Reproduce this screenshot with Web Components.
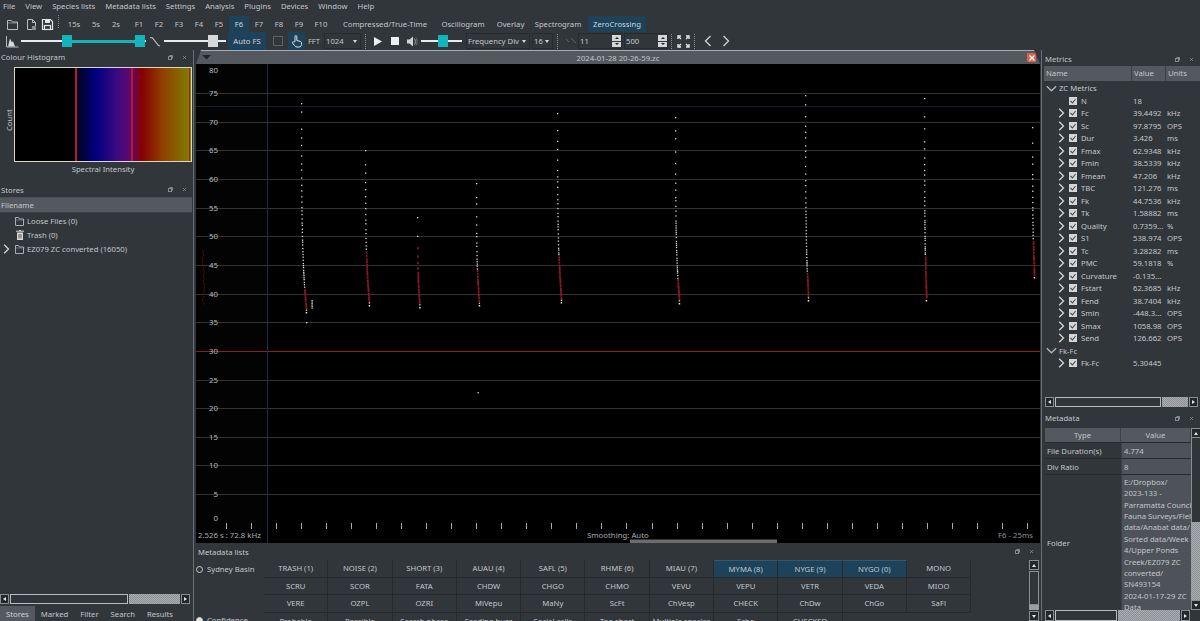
<!DOCTYPE html>
<html><head><meta charset="utf-8">
<style>
html,body{margin:0;padding:0;background:#31363b;overflow:hidden}
body{width:1200px;height:621px;font:7.7px "Noto Sans","Open Sans",sans-serif;color:#c2c6ca}
</style></head><body>
<app-window></app-window>
<script>
function def(name,css,html){
  const C=class extends HTMLElement{
    constructor(){super();const r=this.attachShadow({mode:'open'});r.innerHTML='<style>'+css+'</style>'+(typeof html==='function'?html(this):html);}
  };
  customElements.define(name,C);
}
const ic={
 open:'<svg width="13" height="13" viewBox="0 0 13 13" fill="none" stroke="#b8bcc0"><path d="M1.5 11.5v-9h4l1 1.5h5v7.5z"/><path d="M1.5 5h10" stroke-opacity=".6"/></svg>',
 file:'<svg width="13" height="13" viewBox="0 0 13 13" fill="none" stroke="#b8bcc0"><path d="M2.5 11.5v-10h5l3 3v7z"/><path d="M7.5 1.5v3h3"/><rect x="7" y="8" width="4" height="4" fill="#8a8e92" stroke="none"/></svg>',
 save:'<svg width="13" height="13" viewBox="0 0 13 13" fill="none" stroke="#e4e6e8" stroke-width="1.2"><path d="M1.5 1.5h8l2 2v8h-10z"/><rect x="4" y="1.5" width="5" height="3.5" fill="#e4e6e8" stroke="none"/><rect x="3.5" y="7.5" width="6" height="4"/></svg>',
 hist:'<svg width="14" height="13" viewBox="0 0 14 13" fill="none"><path d="M1.5 1v11h12" stroke="#b8bcc0"/><path d="M3 11.5l2-8 2 4 1-1.5 2 5.5z" fill="#d8dadc"/></svg>',
 diag:'<svg width="12" height="12" viewBox="0 0 12 12" fill="none" stroke="#c4c8cc" stroke-width="1.1"><path d="M1 2.5l2.5 .5 6 7.5 1.5 .5"/></svg>',
 hand:'<svg width="12" height="13" viewBox="0 0 12 13" fill="none" stroke="#e2e4e6"><path d="M4 6.5v-5a.9.9 0 011.8 0v4l3.2.8c1 .3 1.5.8 1.5 1.7v1.5c0 1.5-1 2.5-2.5 2.5h-2c-1 0-1.7-.5-2.3-1.3L1.5 8c-.5-1 .7-1.7 1.4-.9z"/></svg>',
 play:'<svg width="9" height="9" viewBox="0 0 9 9"><path d="M1 0l8 4.5-8 4.5z" fill="#eceeef"/></svg>',
 stop:'<svg width="8" height="8" viewBox="0 0 8 8"><rect width="8" height="8" fill="#eceeef"/></svg>',
 spk:'<svg width="11" height="11" viewBox="0 0 11 11"><path d="M0 3.5h2.5L6 .5v10L2.5 7.5H0z" fill="#d0d2d4"/><path d="M7.5 2.5c1.2 1.8 1.2 4.2 0 6" stroke="#a0a4a8" fill="none"/><path d="M9 1.5c1.6 2.5 1.6 5.5 0 8" stroke="#70747a" fill="none"/></svg>',
 dim:'<svg width="12" height="8" viewBox="0 0 12 8" fill="none" stroke="#5d6267"><path d="M1 2l3 3M6 1l5 5"/></svg>',
 full:'<svg width="13" height="13" viewBox="0 0 13 13" fill="none" stroke="#e6e8ea" stroke-width="1.4"><path d="M1 4V1h3M9 1h3v3M12 9v3H9M4 12H1V9"/><path d="M1.5 1.5l2.5 2.5M11.5 1.5L9 4M11.5 11.5L9 9M1.5 11.5L4 9"/></svg>',
 lt:'<svg width="8" height="12" viewBox="0 0 8 12" fill="none" stroke="#d0d2d4" stroke-width="1.3"><path d="M6.5 1L1.5 6l5 5"/></svg>',
 gt:'<svg width="8" height="12" viewBox="0 0 8 12" fill="none" stroke="#d0d2d4" stroke-width="1.3"><path d="M1.5 1l5 5-5 5"/></svg>',
 r:'<svg width="7" height="10" viewBox="0 0 7 10" fill="none" stroke="#d4d6d8" stroke-width="1.3"><path d="M1.2 .8L5.5 5 1.2 9.2"/></svg>',
 d:'<svg width="11" height="7" viewBox="0 0 11 7" fill="none" stroke="#b0b4b8" stroke-width="1.4"><path d="M.8 1.2L5.5 5.8 10.2 1.2"/></svg>',
 folder:'<svg width="10" height="9" viewBox="0 0 10 9" fill="none" stroke="#a8acb0"><path d="M.5 8.5v-8h3l1 1.5h4v6.5z"/><path d="M.5 3h9" stroke-opacity=".5"/></svg>',
 trash:'<svg width="8" height="10" viewBox="0 0 8 10"><path d="M1 2.5h6V10H1z" fill="#d8dadc"/><path d="M0 1.2h8M3 .4h2" stroke="#d8dadc"/><path d="M3 4v4.5M5 4v4.5" stroke="#555"/></svg>',
 chk:'<svg width="8" height="8" viewBox="0 0 8 8"><rect width="8" height="8" fill="#d4d6d8"/><path d="M1.5 4l2 2 3-4" stroke="#4a4f54" stroke-width="1.1" fill="none"/></svg>'
};

def('menu-bar',':host{display:flex;height:12px;align-items:center;padding-left:3px;gap:10px;line-height:12px;white-space:nowrap}',
 ['File','View','Species lists','Metadata lists','Settings','Analysis','Plugins','Devices','Window','Help'].map(t=>'<span>'+t+'</span>').join(''));

def('tool-btn',':host{display:flex;flex:none;height:100%;align-items:center;justify-content:center;white-space:nowrap;box-sizing:border-box}:host([on]){background:#1d4259;color:#cfd6dc}','<slot></slot>');
def('tool-sep',':host{display:block;flex:none;width:1px;height:15px;margin:0 4px;background-image:repeating-linear-gradient(#8a8e92 0 1px,transparent 1px 2px)}','');
def('combo-box',':host{display:flex;flex:none;height:16px;box-sizing:border-box;border:1px solid #272a2e;align-items:center;padding-left:1px;white-space:nowrap;justify-content:space-between;padding-right:3px}i{width:0;height:0;border:2.5px solid transparent;border-top:3px solid #d8dadc;border-bottom:0}','<span><slot></slot></span><i></i>');
def('spin-box',':host{display:flex;flex:none;height:16px;box-sizing:border-box;border:1px solid #272a2e;align-items:center;padding-left:1px;white-space:nowrap;justify-content:space-between;color:#c4c8cc}b{display:flex;flex-direction:column;width:9px;height:12px;gap:1px}b u{flex:1;background:#d4d6d8;display:flex;align-items:center;justify-content:center}b u::after{content:"";border:2px solid transparent}b u:first-child::after{border-bottom:2.5px solid #222;border-top:0}b u:last-child::after{border-top:2.5px solid #222;border-bottom:0}','<span><slot></slot></span><b><u></u><u></u></b>');
def('range-slider',':host{display:block;flex:none;position:relative;height:100%}.t{position:absolute;left:0;right:0;top:50%;height:2px;margin-top:-1px;background:#e8eaeb}.a{position:absolute;top:50%;height:3px;margin-top:-1.5px;background:#14b4bd}.h{position:absolute;top:50%;width:10px;height:12px;margin:-6px 0 0 -5px;background:var(--hc,#14b4bd)}',
 h=>{const hs=(h.getAttribute('handles')||'').split(',').map(Number);let s='<div class="t"></div>';if(hs.length>1)s+='<div class="a" style="left:'+hs[0]+'px;width:'+(hs[1]-hs[0])+'px"></div>';hs.forEach(x=>s+='<div class="h" style="left:'+x+'px"></div>');return s;});

const bb=(t,w,on)=>'<tool-btn style="width:'+w+'px" '+(on?'on':'')+'>'+t+'</tool-btn>';
const sp=w=>'<span style="flex:none;width:'+w+'px"></span>';
def('tool-bar-one',':host{display:flex;height:20px;align-items:flex-end;padding-left:5px}tool-btn{height:16px}',
 ()=>bb(ic.open,14)+sp(5)+bb(ic.file,14)+sp(2)+bb(ic.save,14)+'<tool-sep style="margin:0 5px 0 4px;height:14px;align-self:center"></tool-sep>'
 +bb('15s',20)+sp(2)+bb('5s',20)+bb('2s',20)+sp(3)
 +bb('F1',20)+bb('F2',20)+bb('F3',20)+bb('F4',20)+bb('F5',20)+bb('F6',20,1)+bb('F7',20)+bb('F8',20)+bb('F9',20)+bb('F10',24)+sp(10)
 +bb('Compressed/True-Time',84)+sp(15)+bb('Oscillogram',42)+sp(13)+bb('Overlay',27)+sp(11)+bb('Spectrogram',46)+sp(7)+bb('ZeroCrossing',58,1));

def('tool-bar-two',':host{display:flex;height:18px;align-items:center;padding-left:5px}tool-btn{height:18px}',
 ()=>bb(ic.hist,14)+sp(2)+'<range-slider handles="46,119" style="width:125px"></range-slider>'+sp(3)+bb(ic.diag,12)+sp(3)
 +'<range-slider handles="49" style="width:62px;--hc:#d6d8da"></range-slider>'+sp(2)
 +bb('Auto FS',38,1)+sp(7)+bb('<span style="display:block;width:10px;height:10px;border:1px solid #5d6267;box-sizing:border-box"></span>',10)+sp(5)+bb(ic.hand,17,1)+sp(3)+bb('FFT',12)+sp(4)
 +'<combo-box style="width:37px">1024</combo-box><tool-sep></tool-sep>'+sp(3)+bb(ic.play,9)+sp(9)+bb(ic.stop,8)+sp(8)+bb(ic.spk,11)+sp(3)
 +'<range-slider handles="22" style="width:41px"></range-slider>'+sp(4)
 +'<combo-box style="width:64px">Frequency Div</combo-box>'+sp(2)+'<combo-box style="width:21px">16</combo-box><tool-sep></tool-sep>'+sp(3)+bb(ic.dim,12)+sp(1)
 +'<spin-box style="width:44px">11</spin-box>'+sp(2)+'<spin-box style="width:44px">500</spin-box><tool-sep style="margin:0 5px 0 3px"></tool-sep>'+bb(ic.full,13)+'<tool-sep></tool-sep>'+sp(5)+bb(ic.lt,8)+sp(10)+bb(ic.gt,8));

def('dock-title',':host{display:flex;flex:none;height:14px;align-items:center;justify-content:space-between;padding:0 4px 0 var(--pl,1px);white-space:nowrap}span{display:flex;gap:9px;font-size:7px;padding-right:2px}svg{display:block}',
 '<slot></slot><span><svg width="5" height="5" viewBox="0 0 5 5" fill="none" stroke="#868a8e"><rect x=".5" y="1.5" width="3" height="3"/><path d="M1.5 .5h3v3"/></svg><svg width="5" height="5" viewBox="0 0 5 5" stroke="#868a8e" stroke-width=".8"><path d="M1 1l3 3M4 1L1 4"/></svg></span>');

def('scroll-bar',':host{display:flex;height:var(--h,11px);gap:1px;box-sizing:border-box;align-items:stretch;flex:none}.a{width:9px;flex:none;background:#24272a;border:1px solid #8a8e92;box-sizing:border-box;display:flex;align-items:center;justify-content:center}.a::after{content:"";border:2.5px solid transparent}.l::after{border-right:3px solid #e2e4e6;border-left:0}.r::after{border-left:3px solid #e2e4e6;border-right:0}.t{flex:var(--t,3);border:1px solid #b8bcc0;background:#30353a;box-sizing:border-box}.g{flex:var(--g,1);background:repeating-conic-gradient(#8e9296 0 25%,#a8acb0 0 50%) 0 0/2px 2px}',
 '<div class="a l"></div><div class="t"></div><div class="g"></div><div class="a r"></div>');

def('histogram-plot',':host{display:block;height:118px;position:relative;flex:none}.box{position:absolute;left:14px;top:3px;width:178px;height:95px;box-sizing:border-box;border:1px solid #d8d8c8;background:linear-gradient(90deg,#000 0 33%,#020224 36%,#000080 46%,#3c0a80 58%,#60086e 66%,#860000 72%,#904000 84%,#808000 100%)}.m{position:absolute;top:0;bottom:0;width:2px;background:#b01c30}.c{position:absolute;left:2px;top:46px;writing-mode:vertical-rl;transform:rotate(180deg);line-height:14px;height:21px}.s{position:absolute;left:14px;width:178px;text-align:center;top:98px;line-height:14px}',
 '<div class="box"><i class="m" style="left:60px"></i><i class="m" style="left:116px"></i><i class="m" style="left:174px;width:1px"></i></div><span class="c">Count</span><span class="s">Spectral Intensity</span>');

def('file-row',':host{display:flex;height:14px;align-items:center;white-space:nowrap}.a{width:13px;flex:none;padding-left:3px;box-sizing:border-box;display:flex}.i{width:14px;flex:none;display:flex;justify-content:center}',
 h=>'<span class="a">'+(h.hasAttribute('open')?ic.r:'')+'</span><span class="i">'+ic[h.getAttribute('icon')]+'</span><slot></slot>');

def('left-panel',':host{display:flex;flex-direction:column;flex:none;height:100%;border-right:1px solid #6a6f74;box-sizing:border-box;width:194px}.hd{height:16px;background:#54595f;display:flex;align-items:center;padding-left:1px;flex:none;border-top:1px solid #4a4f54;border-bottom:1px solid #3c4146;box-sizing:border-box;margin-right:1px}.tree{flex:1;padding-top:1px;min-height:0}.tabs{display:flex;height:15px;flex:none;align-items:center}.tabs span{padding:0 6px;height:100%;display:flex;align-items:center}.tabs .on{background:#54595f;color:#d0d2d4}',
 `<dock-title>Colour Histogram</dock-title><histogram-plot></histogram-plot>
 <dock-title style="height:15px">Stores</dock-title>
 <div class="hd">Filename</div>
 <div class="tree"><file-row icon="folder">Loose Files (0)</file-row><file-row icon="trash">Trash (0)</file-row><file-row icon="folder" open>EZ079 ZC converted (16050)</file-row></div>
 <scroll-bar style="--h:10px;--t:119;--g:52;margin:0 3px 2px 0"></scroll-bar>
 <div class="tabs"><span class="on">Stores</span><span>Marked</span><span>Filter</span><span>Search</span><span>Results</span></div>`);

def('doc-tab',':host{display:flex;height:14px;flex:none;background:#54595f;border-top:1px solid #a8acb2;box-sizing:border-box;align-items:center;justify-content:center;position:relative;color:#c0c4c8;clip-path:polygon(5px 0,calc(100% - 6px) 0,100% 100%,0 100%)}svg{position:absolute;left:6px;top:4px}.x{position:absolute;right:4px;top:2px;width:9px;height:9px;background:#e0604f;border-radius:1px;display:flex;align-items:center;justify-content:center}',
 '<svg width="9" height="5" viewBox="0 0 9 5"><path d="M0 0h9L4.5 4.5z" fill="#24272a"/></svg><slot></slot><span class="x"><svg style="position:static;display:block" width="6" height="6" viewBox="0 0 6 6" stroke="#fff" stroke-width="1.3"><path d="M.5 .5l5 5M5.5 .5l-5 5"/></svg></span>');

def('zc-chart',':host{display:block;height:479px;flex:none;background:#000;position:relative;overflow:hidden}svg{display:block;font:7.8px "Noto Sans","Open Sans",sans-serif}',
 ()=>{
  let seed=7;const rnd=()=>(seed=(seed*16807)%2147483647)/2147483647;
  let s='<svg width="844" height="479" viewBox="196 64 844 479">';
  s+='<rect x="196" y="64" width="71" height="479" fill="#030303"/>';
  for(let i=0;i<15;i++){const y=93+i*28.65;if(Math.abs(y-351)<3)continue;s+='<rect x="196" y="'+Math.round(y)+'" width="844" height="1" fill="#333"/>';}
  s+='<rect x="196" y="351" width="844" height="1" fill="#8c1c24"/>';
  s+='<rect x="196" y="106" width="844" height="1" fill="#12202e"/><rect x="267" y="64" width="1" height="479" fill="#1a3044"/>';
  const labs=[[80,70]];for(let i=1;i<16;i++)labs.push([80-i*5,93+(i-1)*28.65]);labs.push([0,518]);
  labs.forEach(([t,y])=>{s+='<text x="218" y="'+(y+3).toFixed(1)+'" text-anchor="end" fill="#b8bcc0">'+t+'</text>';});
  for(let i=0;i<33;i++){const x=Math.round(226+i*25.03);s+='<rect x="'+x+'" y="523" width="1" height="6" fill="#aaa"/>';}
  const cols=[[301,103,312,5,287],[365,150,305,4,250],[417,217,307,2.5,247],[476,183,305,3,270],[557,113,302,4,255],[675,117,303,4,278],[805,95,300,3,272],[924,98,300,2,255],[1032,127,277,2,240]];
  cols.forEach(([x,top,bot,dr,red])=>{
   let y=top;
   while(y<bot-2){const t=(y-top)/(bot-top);
    const xx=x+dr*Math.pow(t,4);
    if(y>red&&y<bot-3){s+='<rect x="'+xx.toFixed(1)+'" y="'+y.toFixed(1)+'" width="1.7" height="2.2" fill="#8c1828"/>';}
    else s+='<rect x="'+xx.toFixed(1)+'" y="'+y.toFixed(1)+'" width="1.3" height="1.3" fill="#dcdcdc"/>';
    y+=(2+12*Math.pow(1-t,2.5))*(0.6+rnd()*0.8);
   }
   s+='<rect x="'+(x+dr-.3).toFixed(1)+'" y="'+bot+'" width="1.5" height="1.5" fill="#eee"/>';
  });
  for(let i=0;i<24;i++){s+='<rect x="'+(202+rnd()*2).toFixed(1)+'" y="'+(250+i*2.3).toFixed(1)+'" width="1" height="1.5" fill="#5c1018"/>';}
  for(let i=0;i<6;i++){s+='<rect x="311.5" y="'+(300+i*1.5)+'" width="1.2" height="1.2" fill="#d8e8e8"/>';}
  s+='<rect x="306" y="322" width="1.3" height="1.3" fill="#ddd"/><rect x="477.5" y="392" width="1.3" height="1.3" fill="#ddd"/>';
  s+='<text x="198" y="538" fill="#a8acb0">2.526 s : 72.8 kHz</text><text x="587" y="538" fill="#a8acb0">Smoothing: Auto</text><text x="998" y="538" fill="#8c9094">F6 - 25ms</text>';
  s+='<rect x="630" y="539.5" width="147" height="3.5" fill="#6c6c6c"/>';
  return s+'</svg>';
 });

def('label-button',':host{display:flex;align-items:center;justify-content:center;background:#31363b;box-sizing:border-box;border:1px solid #26292d;border-width:0 1px 1px 0;white-space:nowrap}:host([on]){background:#1d4259;border-top:1px solid #2e5a76}','<slot></slot>');

def('meta-lists',':host{display:flex;flex-direction:column;flex:1;min-height:0;overflow:hidden}.body{display:flex;flex:1;min-height:0}.l{width:68px;flex:none;display:flex;flex-direction:column;box-sizing:border-box}.rad{display:flex;align-items:center;gap:4px;height:18px;white-space:nowrap;flex:none}.rad i{width:5px;height:5px;border:1px solid #c8ccd0;border-radius:50%;flex:none}.rad i.f{background:#e8e8e8}.grid{display:grid;grid-template-columns:repeat(11,64.3px);grid-auto-rows:17.6px;align-content:start;flex:none}.sb{margin-left:auto;width:10px;margin-right:1px;display:flex;flex-direction:column;gap:1px}.sb b{height:10px;background:#24272a;border:1px solid #8a8e92;box-sizing:border-box;flex:none;display:flex;align-items:center;justify-content:center}.sb b::after{content:"";border:2.5px solid transparent}.sb b:first-child::after{border-bottom:3px solid #e2e4e6;border-top:0}.sb b:last-child::after{border-top:3px solid #e2e4e6;border-bottom:0}.sb s{flex:1;border:1px solid #8a8e92;background:#30353a}.sb u{height:5px;background:#9a9ea2;flex:none;margin-top:-1px}',
 ()=>{
  const rows=[['TRASH (1)','NOISE (2)','SHORT (3)','AUAU (4)','SAFL (5)','RHME (6)','MIAU (7)','MYMA (8)','NYGE (9)','NYGO (0)','MONO'],
  ['SCRU','SCOR','FATA','CHDW','CHGO','CHMO','VEVU','VEPU','VETR','VEDA','MIOO'],
  ['VERE','OZPL','OZRI','MiVepu','MaNy','ScFt','ChVesp','CHECK','ChDw','ChGo','SaFl'],
  ['Probable','Possible','Search phase','Feeding buzz','Social calls','Too short','Multiple species','Echo','CHECKED']];
  let g='';rows.forEach((r,ri)=>r.forEach((t,i)=>{g+='<label-button '+(ri==0&&i>=7&&i<=9?'on':'')+'>'+t+'</label-button>';}));
  return '<dock-title style="--pl:2px;height:17px">Metadata lists</dock-title><div class="body"><div class="l"><div class="rad"><i></i>Sydney Basin</div><div style="height:33px;flex:none"></div><div class="rad"><i class="f"></i>Confidence</div></div><div class="grid">'+g+'</div><div class="sb"><b></b><s></s><u></u><b></b></div></div>';
 });

def('center-panel',':host{display:flex;flex-direction:column;flex:1;min-width:0;margin-left:2px;margin-right:1px;height:100%}','<doc-tab>2024-01-28 20-26-59.zc</doc-tab><zc-chart></zc-chart><meta-lists></meta-lists>');

def('metric-row',':host{display:grid;grid-template-columns:25px 12px 52px 34px 1fr;height:12.5px;align-items:center;white-space:nowrap}.a,.c{display:flex;align-items:center;justify-content:flex-end;padding-right:4px}.c{justify-content:flex-start;padding:0}',
 h=>{const sub=h.hasAttribute('exp');return '<span class="a">'+(sub?ic.r:'')+'</span><span class="c">'+ic.chk+'</span><span>'+h.getAttribute('n')+'</span><span>'+h.getAttribute('v')+'</span><span>'+(h.getAttribute('u')||'')+'</span>';});
def('metric-group',':host{display:flex;height:12.5px;align-items:center;gap:2px;padding-left:2px;white-space:nowrap}','<span style="display:flex;width:11px">'+ic.d+'</span><slot></slot>');

def('metrics-panel',':host{display:flex;flex-direction:column;height:359px;flex:none;padding-left:2px;box-sizing:border-box}.hd{display:grid;grid-template-columns:88px 34px 1fr;height:15px;background:#54595f;flex:none;line-height:15px}.hd span{padding-left:2px;border-right:1px solid #3c4146}.tree{flex:1;padding-top:1px;min-height:0;overflow:hidden}',
 ()=>{const d=[['N','18','',0],['Fc','39.4492','kHz'],['Sc','97.8795','OPS'],['Dur','3.426','ms'],['Fmax','62.9348','kHz'],['Fmin','38.5339','kHz'],['Fmean','47.206','kHz'],['TBC','121.276','ms'],['Fk','44.7536','kHz'],['Tk','1.58882','ms'],['Quality','0.7359...','%'],['S1','538.974','OPS'],['Tc','3.28282','ms'],['PMC','59.1818','%'],['Curvature','-0.135...',''],['Fstart','62.3685','kHz'],['Fend','38.7404','kHz'],['Smin','-448.3...','OPS'],['Smax','1058.98','OPS'],['Send','126.662','OPS']];
 const row=r=>'<metric-row '+(r[3]===0?'':'exp')+' n="'+r[0]+'" v="'+r[1]+'" u="'+r[2]+'"></metric-row>';
 return '<dock-title style="--pl:3px;margin-left:-2px">Metrics</dock-title><div class="hd"><span>Name</span><span>Value</span><span style="border:0">Units</span></div><div class="tree"><metric-group>ZC Metrics</metric-group>'+d.map(row).join('')+'<metric-group>Fk-Fc</metric-group>'+row(['Fk-Fc','5.30445',''])+'</div><scroll-bar style="--h:10px;--t:108;--g:27;margin:0 2px 0 1px"></scroll-bar><div style="height:4px;flex:none"></div>';});

def('metadata-panel',':host{display:flex;flex-direction:column;flex:1;min-height:0;padding-left:2px;box-sizing:border-box}.w{display:flex;flex:1;min-height:0}.tb{width:146px;flex:none;display:grid;grid-template-columns:76px 70px;grid-template-rows:15px 16px 16px 136px;margin-left:1px}.tb>*{box-sizing:border-box;border-bottom:1px solid #26292d;display:flex;align-items:center;padding-left:2px;overflow:hidden}.h{background:#54595f;justify-content:center;padding:0!important;border-right:1px solid #3c4146}.v{background:#4e5359;border-left:1px solid #3c4146}.f{display:block!important;padding:2px 0 0 2px!important;line-height:11.36px;white-space:nowrap}.sb{width:10px;display:flex;flex-direction:column;flex:none}.sb b{height:10px;background:#24272a;border:1px solid #8a8e92;box-sizing:border-box;flex:none;display:flex;align-items:center;justify-content:center}.sb b::after{content:"";border:2.5px solid transparent}.sb b:first-child::after{border-bottom:3px solid #e2e4e6;border-top:0}.sb b:last-child::after{border-top:3px solid #e2e4e6;border-bottom:0}.sb s{flex:90;background:#30353a;border:1px solid #8a8e92;border-width:0 1px}.sb u{flex:83;background:repeating-conic-gradient(#8e9296 0 25%,#a8acb0 0 50%) 0 0/2px 2px}',
 `<dock-title style="--pl:3px;margin:0 0 3px -2px">Metadata</dock-title>
 <div class="w"><div class="tb"><div class="h">Type</div><div class="h">Value</div><div>File Duration(s)</div><div class="v">4.774</div><div>Div Ratio</div><div class="v">8</div><div>Folder</div><div class="v f">E:/Dropbox/<br>2023-133 -<br>Parramatta Council<br>Fauna Surveys/Field<br>data/Anabat data/<br>Sorted data/Week<br>4/Upper Ponds<br>Creek/EZ079 ZC<br>converted/<br>SN493154<br>2024-01-17-29 ZC<br>Data</div></div><div class="sb"><b></b><s></s><u></u><b></b></div></div>
 <scroll-bar style="--h:11px;--t:60;--g:62;margin:0 10px 0 1px"></scroll-bar>`);

def('right-panel',':host{display:flex;flex-direction:column;width:159px;flex:none;height:100%;border-left:1px solid #6a6f74;box-sizing:border-box;padding-top:2px}','<metrics-panel></metrics-panel><metadata-panel></metadata-panel>');

def('app-window',':host{display:flex;flex-direction:column;width:1200px;height:621px;overflow:hidden}.main{display:flex;flex:1;min-height:0}',
 '<menu-bar></menu-bar><tool-bar-one></tool-bar-one><tool-bar-two></tool-bar-two><div class="main"><left-panel></left-panel><center-panel></center-panel><right-panel></right-panel></div>');
</script>
</body></html>
